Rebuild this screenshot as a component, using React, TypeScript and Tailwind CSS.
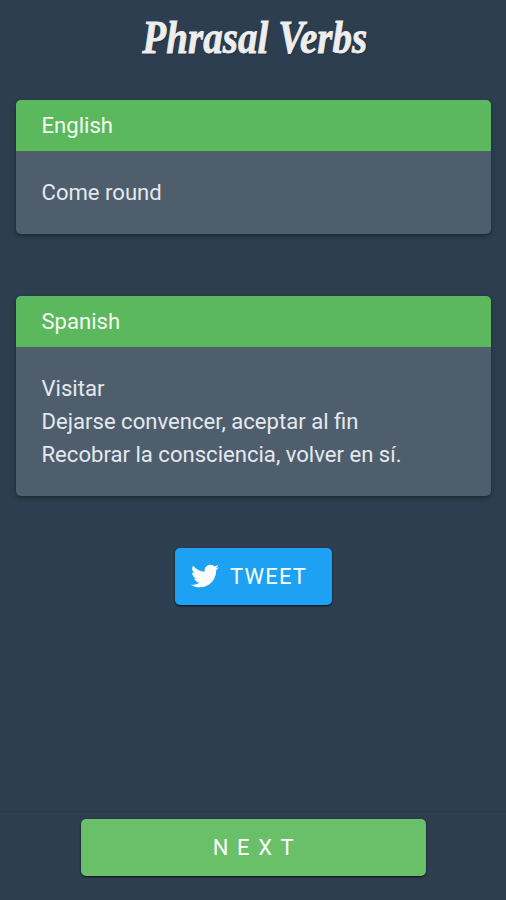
import { FaTwitter } from 'react-icons/fa';

const PhraseCard = ({ title, lines }: { title: string; lines: string[] }) => (
  <section className="overflow-hidden rounded-[5px] bg-[#4f5e6c] shadow-[0_2px_4px_rgba(0,0,0,0.35)]">
    <h2 className="flex h-[51.5px] items-center bg-[#5cb85c] px-[25.5px] text-[22.1px] leading-[33px] text-[#f4fbf4]">
      {title}
    </h2>
    <div className="px-[25.5px] py-[25px] text-[22.1px] leading-[33px] text-[#e3e9ef]">
      {lines.map((line) => (
        <p key={line}>{line}</p>
      ))}
    </div>
  </section>
);

const App = () => (
  <div className="flex h-[900px] w-full flex-col bg-[#2c3e4f] font-['Roboto',sans-serif]">
    {/* Title */}
    <header className="flex h-[99.5px] justify-center pt-[11px]">
      <h1 className="h-[54px] translate-x-[1.5px] scale-x-[0.85] whitespace-nowrap font-['Liberation_Serif',serif] text-[46px] font-bold italic leading-[54px] text-[#eeeeee] [-webkit-text-stroke:0.8px_#eeeeee] [text-shadow:1px_1px_2px_rgba(0,0,0,0.35)]">
        Phrasal Verbs
      </h1>
    </header>

    {/* Cards */}
    <main className="flex flex-1 flex-col pl-4 pr-[15px]">
      <div className="flex flex-col gap-[61.5px]">
        <PhraseCard title="English" lines={['Come round']} />
        <PhraseCard
          title="Spanish"
          lines={['Visitar', 'Dejarse convencer, aceptar al fin', 'Recobrar la consciencia, volver en sí.']}
        />
      </div>
      <button className="mx-auto mt-[51.5px] flex h-[57px] w-[157px] items-center gap-[11.5px] rounded-[5px] bg-[#1da1f2] pl-[15.5px] text-[22px] tracking-[1.2px] text-white shadow-[0_1px_2px_rgba(0,0,0,0.75)]">
        <FaTwitter className="size-7" />
        TWEET
      </button>
    </main>

    {/* Footer */}
    <footer className="flex h-[89px] justify-center border-t border-[#293a4b] pt-[7px]">
      <button className="h-[57px] w-[345px] rounded-[5px] bg-[#6abf69] pl-[9px] text-[22px] tracking-[8.6px] text-white shadow-[0_1px_2px_rgba(0,0,0,0.75)]">
        NEXT
      </button>
    </footer>
  </div>
);

export default App;
